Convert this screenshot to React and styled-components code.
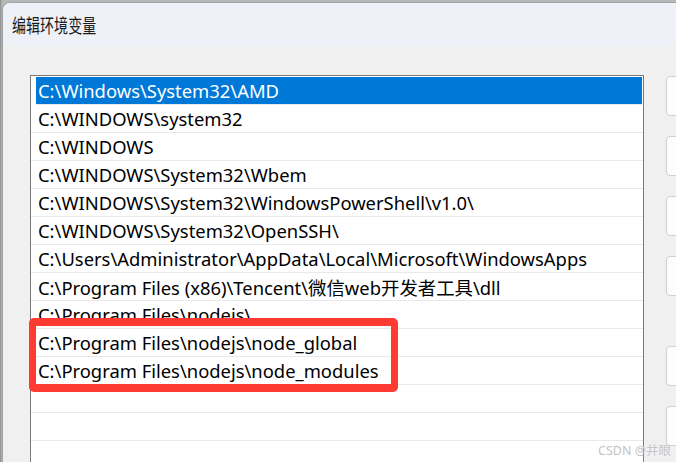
import React from 'react';
import styled, { createGlobalStyle } from 'styled-components';

const GlobalStyle = createGlobalStyle`
  html, body {
    margin: 0;
    padding: 0;
    background: #c9c9c9;
  }
  body {
    font-family: "Noto Sans", "Noto Sans CJK SC", sans-serif;
  }
`;

const Screen = styled.div`
  width: 676px;
  height: 462px;
  overflow: hidden;
  position: relative;
  background: linear-gradient(90deg, #8a8a8a 0, #b8b8b8 2px);
  padding: 2px 0 0 2px;
  box-sizing: border-box;
`;

const Window = styled.div`
  width: 720px;
  height: 470px;
  background: #f0f0f0;
  border-left: 1px solid #a3a3a3;
  border-top: 1px solid #a3a3a3;
  border-top-left-radius: 8px;
  overflow: hidden;
  display: flex;
  flex-direction: column;
`;

const TitleBar = styled.div`
  height: 42px;
  flex: none;
  background: #eef2f8;
  display: flex;
  align-items: center;
  padding-left: 9px;
`;

const Title = styled.span`
  display: inline-block;
  font-family: "Noto Sans CJK SC", sans-serif;
  font-size: 19.5px;
  color: #1b1b1b;
  transform: scaleX(0.72);
  transform-origin: left center;
`;

const Body = styled.div`
  flex: 1;
  display: flex;
  align-items: flex-start;
  padding: 30px 0 0 27px;
  gap: 22px;
`;

const List = styled.div`
  width: 614px;
  height: 400px;
  flex: none;
  background: #fff;
  border: 1px solid #7a7a7a;
  padding-top: 1px;
  box-sizing: border-box;
`;

const Row = styled.div`
  height: 27px;
  border-bottom: 1px solid #e9e9e9;
  display: flex;
  align-items: center;
  white-space: nowrap;
  font-family: "Noto Sans", "Noto Sans CJK SC", sans-serif;
  font-size: 18.4px;
  color: ${(p) => (p.$selected ? '#fff' : '#000')};
  background: ${(p) => (p.$selected ? '#0078d7' : 'transparent')};
  margin-left: ${(p) => (p.$selected ? '5px' : '0')};
  margin-right: ${(p) => (p.$selected ? '1px' : '0')};
  padding-left: ${(p) => (p.$selected ? '2px' : '7px')};
`;

const Buttons = styled.div`
  display: flex;
  flex-direction: column;
  gap: 20px;
  padding-top: 1px;
`;

const Button = styled.div`
  width: 90px;
  height: 40px;
  background: #fdfdfd;
  border: 1px solid #d0d0d0;
  border-radius: 4px;
  box-sizing: border-box;
  margin-top: ${(p) => (p.$spaced ? '30px' : '0')};
`;

const Highlight = styled.div`
  position: absolute;
  left: 29px;
  top: 318px;
  width: 369px;
  height: 74px;
  border: 8px solid #fe3b33;
  border-left-width: 7px;
  border-right-width: 7px;
  border-radius: 5px;
  box-sizing: border-box;
`;

const Watermark = styled.div`
  position: absolute;
  left: 598px;
  top: 440px;
  font-family: "Noto Sans", "Noto Sans CJK SC", sans-serif;
  font-size: 12.5px;
  color: #c4c4c4;
  text-shadow: 0 0 1px #fff;
  white-space: nowrap;
`;

const paths = [
  'C:\\Windows\\System32\\AMD',
  'C:\\WINDOWS\\system32',
  'C:\\WINDOWS',
  'C:\\WINDOWS\\System32\\Wbem',
  'C:\\WINDOWS\\System32\\WindowsPowerShell\\v1.0\\',
  'C:\\WINDOWS\\System32\\OpenSSH\\',
  'C:\\Users\\Administrator\\AppData\\Local\\Microsoft\\WindowsApps',
  'C:\\Program Files (x86)\\Tencent\\微信web开发者工具\\dll',
  'C:\\Program Files\\nodejs\\',
  'C:\\Program Files\\nodejs\\node_global',
  'C:\\Program Files\\nodejs\\node_modules',
  '',
  '',
  '',
];

export default function App() {
  return (
    <>
      <GlobalStyle />
      <Screen>
        <Window>
          <TitleBar>
            <Title>编辑环境变量</Title>
          </TitleBar>
          <Body>
            <List>
              {paths.map((p, i) => (
                <Row key={i} $selected={i === 0}>
                  {p}
                </Row>
              ))}
            </List>
            <Buttons>
              <Button />
              <Button />
              <Button />
              <Button />
              <Button $spaced />
              <Button />
            </Buttons>
          </Body>
        </Window>
        <Highlight />
        <Watermark>CSDN @井眼</Watermark>
      </Screen>
    </>
  );
}
